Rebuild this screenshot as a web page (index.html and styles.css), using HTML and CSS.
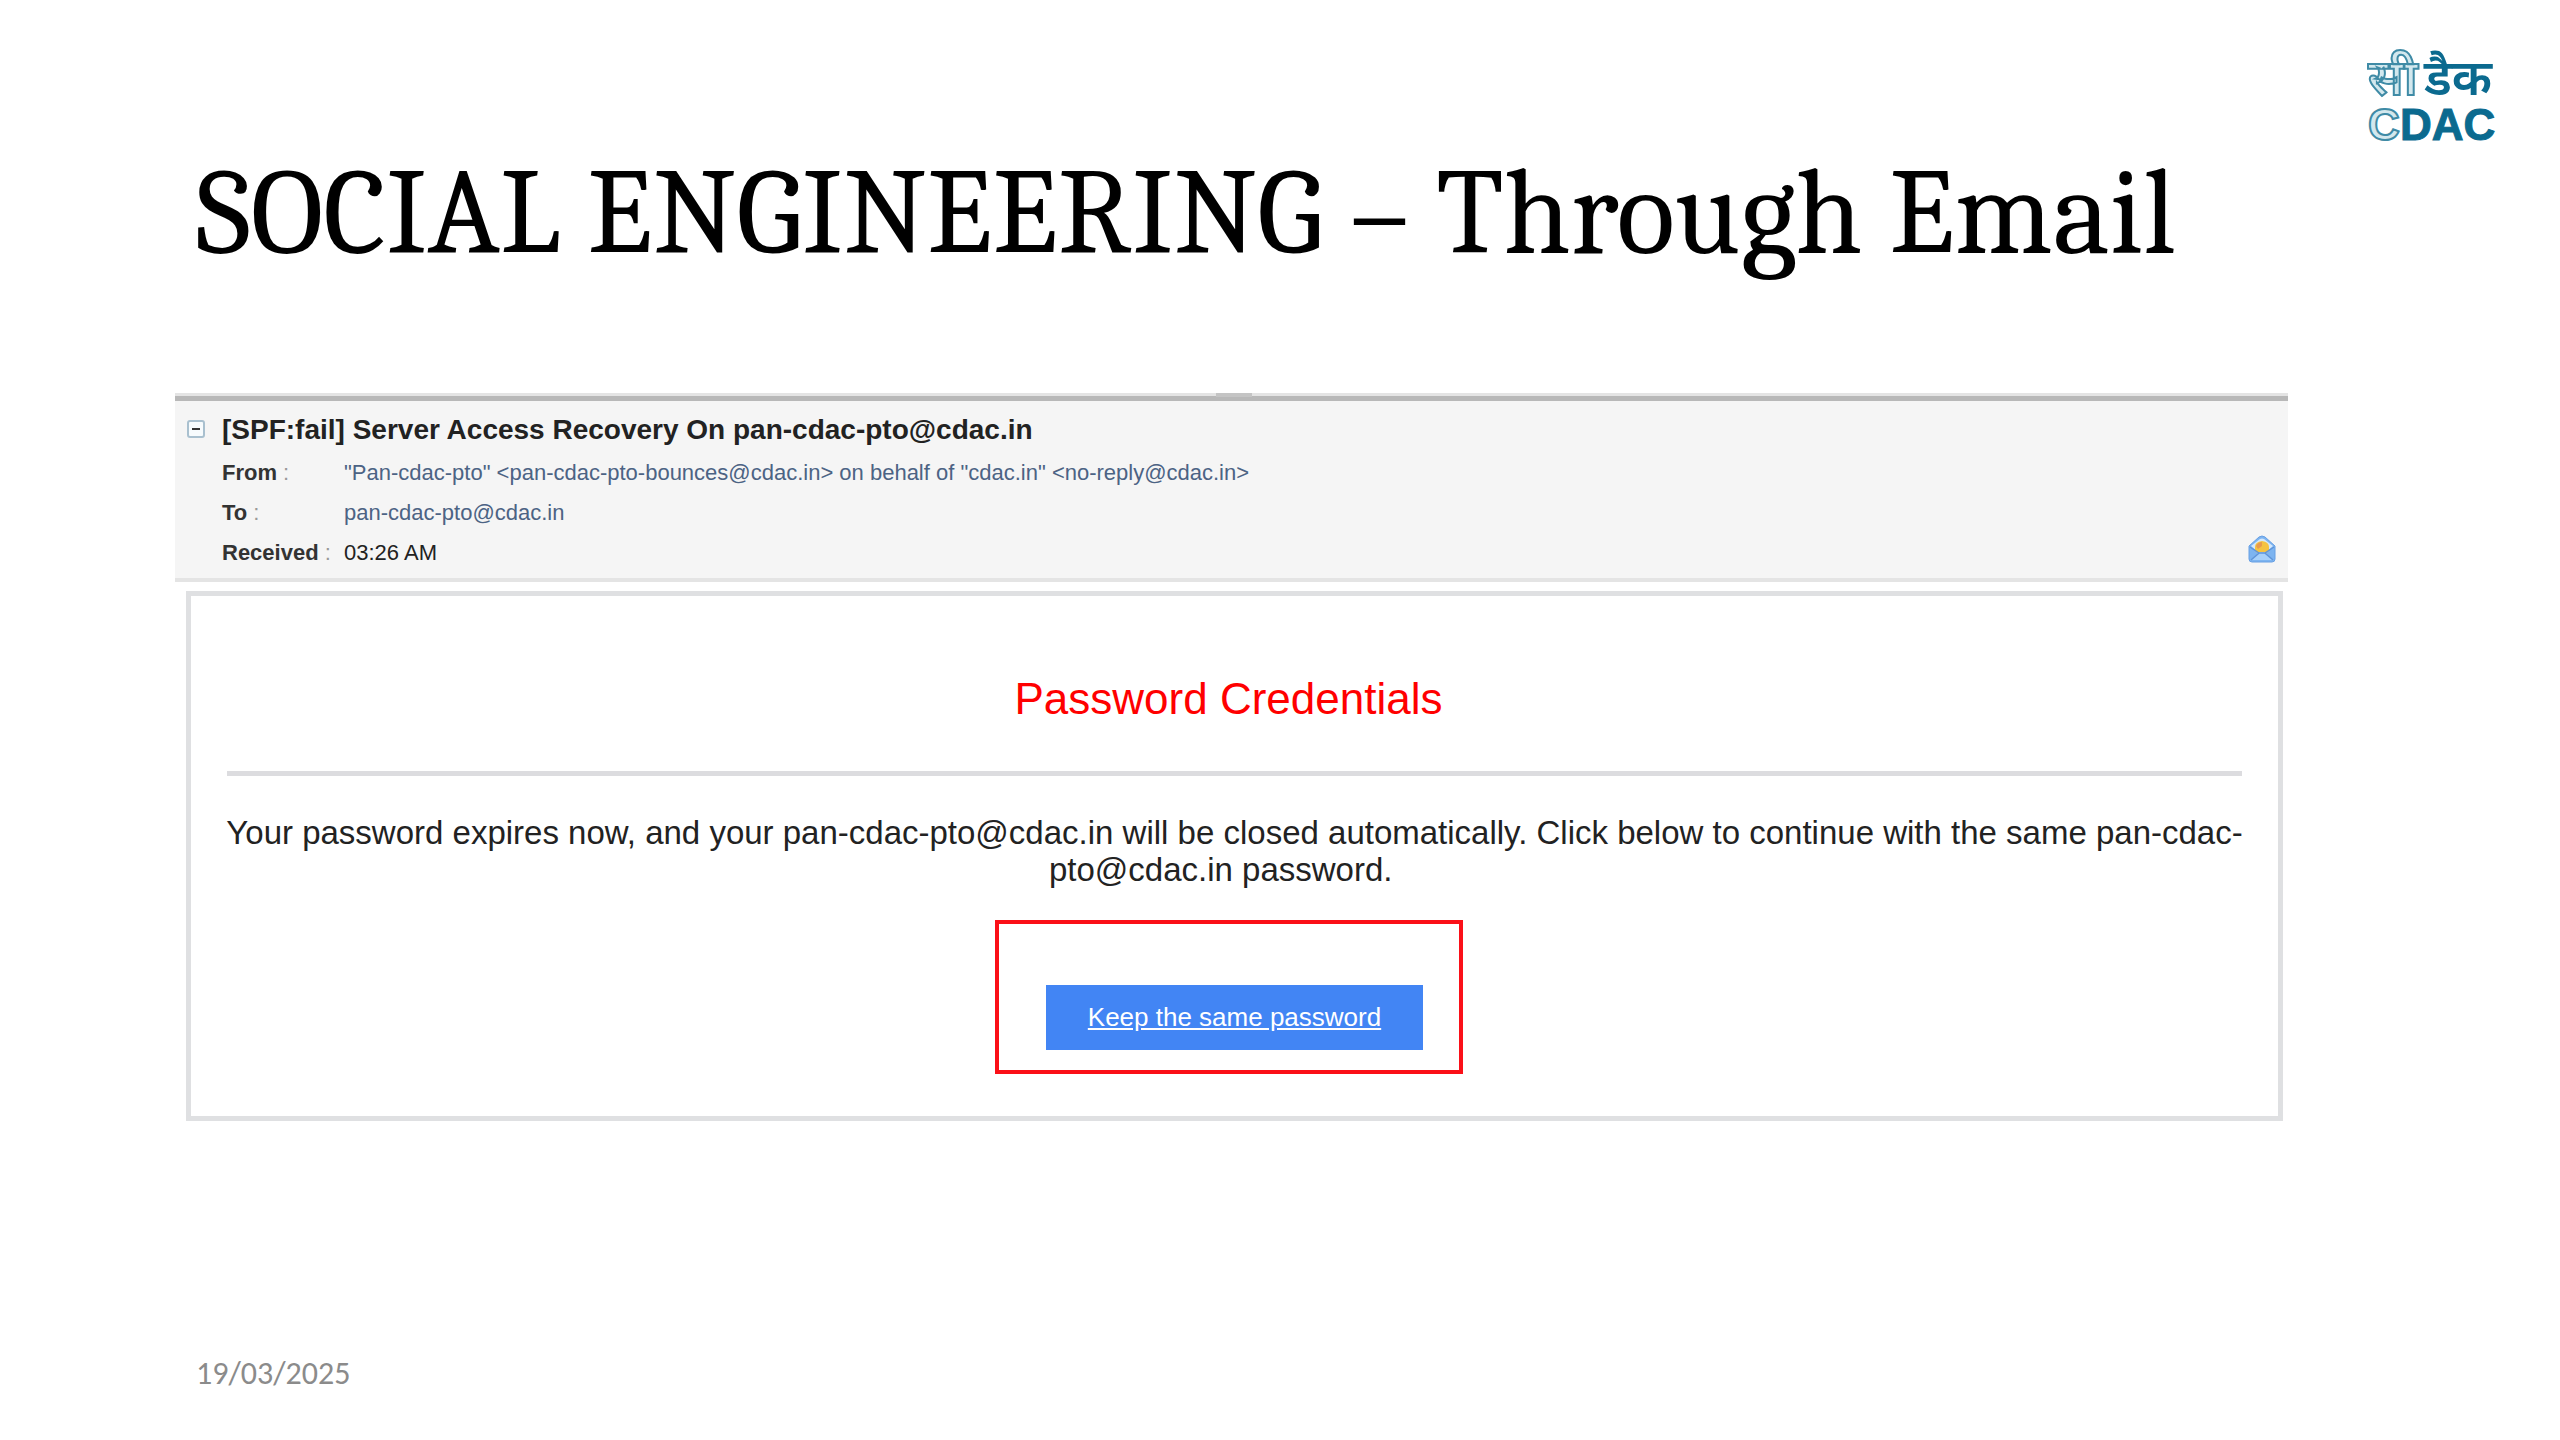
FILE: index.html
```html
<!DOCTYPE html>
<html lang="en">
<head>
<meta charset="utf-8">
<title>Social Engineering – Through Email</title>
<link rel="stylesheet" href="styles.css">
</head>
<body class="slide">
<header class="slide-header">
  <h1 class="slide-title">SOCIAL ENGINEERING – Through Email</h1>
  <svg class="logo" viewBox="0 0 130 96" role="img" aria-label="CDAC">
    <g class="logo-hindi" lang="hi">
      <text class="logo-outline" x="0" y="47">सी</text>
      <text class="logo-solid" x="56" y="47">डैक</text>
    </g>
    <g class="logo-latin">
      <text class="logo-outline" x="0" y="92">C</text>
      <text class="logo-solid" x="32" y="92">DAC</text>
    </g>
  </svg>
</header>

<main class="mail">
  <section class="mail-header">
    <span class="grip"></span>
    <button class="collapse" type="button" aria-label="Collapse message details">
      <svg viewBox="0 0 18 18" width="18" height="18"><rect x="1" y="1" width="16" height="16" rx="2" fill="#f7fbfd" stroke="#a9c0cf" stroke-width="2"/><path d="M5 9h8" stroke="#333" stroke-width="2"/></svg>
    </button>
    <div class="mail-info">
      <h2 class="subject">[SPF:fail] Server Access Recovery On pan-cdac-pto@cdac.in</h2>
      <dl class="fields">
        <dt><b>From</b> :</dt><dd class="address">"Pan-cdac-pto" &lt;pan-cdac-pto-bounces@cdac.in&gt; on behalf of "cdac.in" &lt;no-reply@cdac.in&gt;</dd>
        <dt><b>To</b> :</dt><dd class="address">pan-cdac-pto@cdac.in</dd>
        <dt><b>Received</b> :</dt><dd>03:26 AM</dd>
      </dl>
    </div>
    <svg class="envelope" viewBox="0 0 28 28" width="28" height="28">
      <path d="M1 11 11 2q3-2 6 0l10 9v13q0 3-3 3H4q-3 0-3-3z" fill="#7db4f0" stroke="#68a0e4"/>
      <path d="M3 11 12 4q2-1 4 0l9 7-8 7h-6z" fill="#d5e8fb"/>
      <path d="M7 12q0-5 7-6 7 1 7 6v4l-3 2h-8l-3-2z" fill="#f5c342"/>
      <path d="M8 11q2-4 6-4v4l-4 3z" fill="#e79a4f"/>
      <path d="m3 25 8-8h6l8 8z" fill="#a7d0fa"/>
      <path d="m2 12 9 6-8 7M26 12l-9 6 8 7M11 18h6" fill="none" stroke="#5f94d8" stroke-width="1.5"/>
    </svg>
  </section>

  <article class="message">
    <h3 class="message-title">Password Credentials</h3>
    <hr class="rule">
    <p class="message-text">Your password expires now, and your pan-cdac-pto@cdac.in will be closed automatically. Click below to continue with the same pan-cdac-pto@cdac.in password.&nbsp;&nbsp;&nbsp;</p>
    <div class="highlight"><a class="action" href="#">Keep the same password</a></div>
  </article>
</main>

<footer class="slide-footer">19/03/2025</footer>
</body>
</html>
```
FILE: styles.css
```css
* { box-sizing: border-box; }

.slide {
  display: flex;
  flex-direction: column;
  min-height: 100vh;
  margin: 0;
  background: #fff;
  color: #222;
  font-family: "Liberation Sans", Arial, sans-serif;
}

.slide-header {
  display: flex;
  justify-content: space-between;
  align-items: flex-start;
  padding: 48px 62px 0 196px;
}

.slide-title {
  margin: 96px 0 0;
  color: #000;
  font: 400 121px/140px Cambria, Caladea, "Liberation Serif", serif;
  white-space: nowrap;
}

.logo {
  flex: none;
  width: 130px;
  height: 96px;
  overflow: visible;
}

.logo-hindi {
  font: 600 50px "Noto Sans Devanagari", "Lohit Devanagari", "Noto Sans", sans-serif;
}

.logo-latin { font: 700 44px "Liberation Sans", Arial, sans-serif; }

.logo-solid { fill: #0b6a8f; }

.logo-latin .logo-solid {
  stroke: #0b6a8f;
  stroke-width: 1px;
}

.logo-outline {
  fill: #d3e8ee;
  stroke: #3f8ba6;
  stroke-width: 2px;
}

.mail {
  margin: 109px 272px 0 175px;
}

.mail-header {
  position: relative;
  display: flex;
  align-items: flex-start;
  gap: 17px;
  padding: 12px 12px 5px;
  border-bottom: 4px solid #e4e4e4;
  background: linear-gradient(#e4e4e4 3px, #b8b8b8 3px, #b8b8b8 8px, #f5f5f5 8px);
}

.grip {
  position: absolute;
  top: 0;
  left: 50%;
  width: 36px;
  height: 4px;
  margin-left: -16px;
  background: #c4c4c4;
}

.collapse {
  display: flex;
  margin: 15px 0 0;
  padding: 0;
  border: 0;
  background: none;
}

.mail-info { flex: 1; }

.subject {
  margin: 7px 0 5px;
  font-size: 28px;
  line-height: 36px;
}

.fields {
  display: grid;
  grid-template-columns: 122px 1fr;
  margin: 0;
  font-size: 22px;
  line-height: 40px;
}

.fields dt { color: #999; }
.fields dt b { color: #333; }
.fields dd { margin: 0; }
.fields .address { color: #4c6384; }

.envelope {
  align-self: flex-end;
  margin-bottom: 10px;
}

.message {
  margin: 9px 5px 0 11px;
  padding: 75px 30px 42px;
  border: 5px solid #dfe0e2;
  text-align: center;
}

.message-title {
  margin: 0;
  padding-right: 12px;
  color: #f00;
  font-size: 44px;
  font-weight: 400;
  line-height: 56px;
}

.rule {
  height: 5px;
  margin: 44px 6px 38px;
  border: 0;
  background: #dcdcdf;
}

.message-text {
  margin: 0;
  font-size: 33px;
  line-height: 37px;
}

/* The frame sits slightly left of the button it marks. */
.highlight {
  display: flex;
  justify-content: center;
  width: 468px;
  margin: 32px calc(50% - 228px) 0 auto;
  padding: 61px 0 20px 12px;
  border: 4px solid #fb1018;
}

.action {
  padding: 0 42px;
  background: #4285f4;
  color: #fff;
  font-size: 26px;
  line-height: 65px;
}

.slide-footer {
  margin: auto 196px 48px;
  color: #8b8b8b;
  font: 32px/36px Calibri, Carlito, Lato, sans-serif;
}
```
